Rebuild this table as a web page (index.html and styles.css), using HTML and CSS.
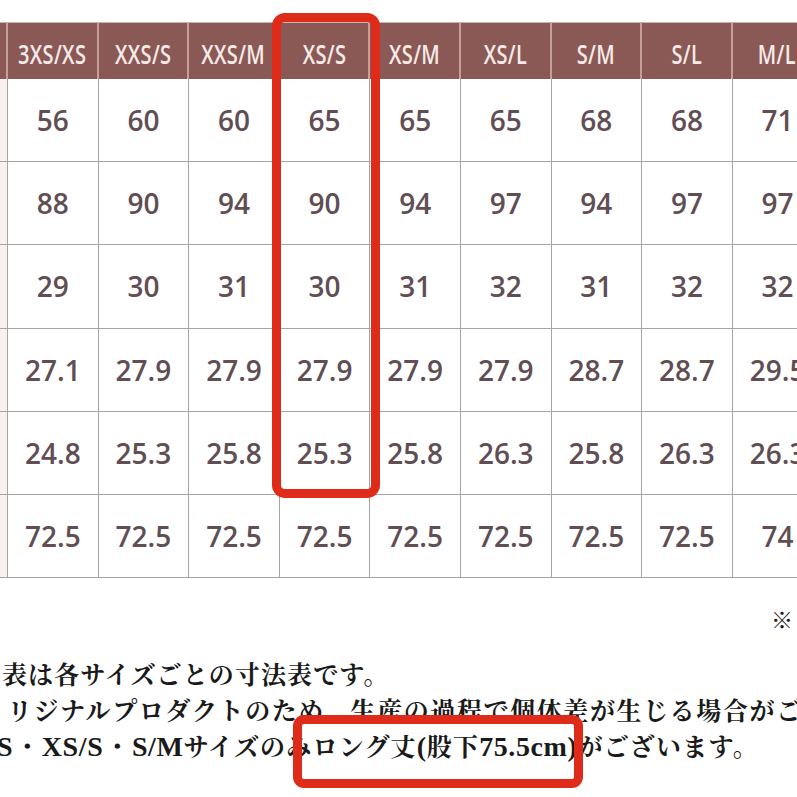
FILE: index.html
```html
<!DOCTYPE html>
<html lang="ja">
<head>
<meta charset="utf-8">
<title>サイズ表</title>
<link rel="stylesheet" href="styles.css">
</head>
<body>
<div class="page">
  <div class="table">
    <div class="cell head stub"></div>
    <div class="cell head"><span class="hl">3XS/XS</span></div>
    <div class="cell head"><span class="hl">XXS/S</span></div>
    <div class="cell head"><span class="hl">XXS/M</span></div>
    <div class="cell head"><span class="hl">XS/S</span></div>
    <div class="cell head"><span class="hl">XS/M</span></div>
    <div class="cell head"><span class="hl">XS/L</span></div>
    <div class="cell head"><span class="hl">S/M</span></div>
    <div class="cell head"><span class="hl">S/L</span></div>
    <div class="cell head"><span class="hl">M/L</span></div>

    <div class="cell stub"></div>
    <div class="cell">56</div><div class="cell">60</div><div class="cell">60</div><div class="cell">65</div><div class="cell">65</div><div class="cell">65</div><div class="cell">68</div><div class="cell">68</div><div class="cell">71</div>

    <div class="cell stub"></div>
    <div class="cell">88</div><div class="cell">90</div><div class="cell">94</div><div class="cell">90</div><div class="cell">94</div><div class="cell">97</div><div class="cell">94</div><div class="cell">97</div><div class="cell">97</div>

    <div class="cell stub"></div>
    <div class="cell">29</div><div class="cell">30</div><div class="cell">31</div><div class="cell">30</div><div class="cell">31</div><div class="cell">32</div><div class="cell">31</div><div class="cell">32</div><div class="cell">32</div>

    <div class="cell stub"></div>
    <div class="cell">27.1</div><div class="cell">27.9</div><div class="cell">27.9</div><div class="cell">27.9</div><div class="cell">27.9</div><div class="cell">27.9</div><div class="cell">28.7</div><div class="cell">28.7</div><div class="cell">29.5</div>

    <div class="cell stub"></div>
    <div class="cell">24.8</div><div class="cell">25.3</div><div class="cell">25.8</div><div class="cell">25.3</div><div class="cell">25.8</div><div class="cell">26.3</div><div class="cell">25.8</div><div class="cell">26.3</div><div class="cell">26.3</div>

    <div class="cell stub"></div>
    <div class="cell">72.5</div><div class="cell">72.5</div><div class="cell">72.5</div><div class="cell">72.5</div><div class="cell">72.5</div><div class="cell">72.5</div><div class="cell">72.5</div><div class="cell">72.5</div><div class="cell">74</div>
  </div>

  <div class="notes">
    <p class="ref">※</p>
    <p class="line l1">表は各サイズごとの寸法表です。</p>
    <p class="line l2">リジナルプロダクトのため、生産の過程で個体差が生じる場合がございます。</p>
    <p class="line l3"><span class="lat">S・XS/S・S/M</span>サイズのみロング丈<span class="lat">(</span>股下<span class="lat">75.5cm)</span>がございます。</p>
  </div>

  <div class="mark mark-col"></div>
  <div class="mark mark-note"></div>
</div>
</body>
</html>
```

FILE: styles.css
```css
* { box-sizing: border-box; }

html, body {
  margin: 0;
  padding: 0;
  background: #ffffff;
}

.page {
  position: relative;
  width: 797px;
  height: 797px;
  overflow: hidden;
  background: #ffffff;
}

.table {
  margin-top: 22px;
  display: grid;
  grid-template-columns: 8px repeat(9, 90.6px);
  grid-template-rows: 57px repeat(6, 83.2px);
  width: 900px;
  font-family: "Open Sans", "Lato", sans-serif;
}

.cell {
  display: flex;
  align-items: center;
  justify-content: center;
  border-right: 1.5px solid #a8a4a5;
  border-bottom: 1.5px solid #a8a4a5;
  color: #604e54;
  font-size: 28px;
  font-weight: 600;
  background: #ffffff;
  white-space: nowrap;
}

.cell.stub {
  background: #f8f1ef;
}

.cell.head {
  background: #8a5956;
  color: #f6ebe7;
  border-right: 2px solid #c59f9b;
  border-bottom: none;
  border-top: 1px solid #cfb2ae;
  padding-top: 4px;
}

.cell.head.stub {
  background: #8a5956;
}

.hl {
  display: inline-block;
  font-size: 27px;
  font-weight: 600;
  letter-spacing: 0.5px;
  transform: scaleX(0.74);
}

.notes {
  padding-top: 26px;
  color: #1a1a1a;
  font-family: "Noto Serif CJK JP", "Noto Sans CJK JP", serif;
}

.ref {
  margin: 0;
  height: 30px;
  line-height: 30px;
  font-size: 22px;
  text-align: right;
  padding-right: 4px;
}

.line {
  margin: 0;
  height: 37px;
  line-height: 37px;
  font-size: 25px;
  font-weight: 700;
  white-space: nowrap;
}

.l1 {
  margin-top: 21px;
  padding-left: 2px;
  letter-spacing: 1.1px;
}

.l2 {
  margin-top: -1px;
  padding-left: 7px;
  letter-spacing: 1.6px;
}

.l3 {
  margin-top: -1px;
  margin-left: -3px;
  letter-spacing: 1.2px;
}

.lat {
  font-family: "Liberation Serif", "DejaVu Serif", serif;
  font-size: 28px;
  font-weight: 700;
  letter-spacing: 0.6px;
}

.mark {
  position: absolute;
  border: 9px solid #df2b1a;
  border-radius: 13px;
}

.mark-col {
  left: 272px;
  top: 13px;
  width: 108px;
  height: 485px;
}

.mark-note {
  left: 293px;
  top: 715px;
  width: 290px;
  height: 73px;
  border-radius: 11px;
}
```
